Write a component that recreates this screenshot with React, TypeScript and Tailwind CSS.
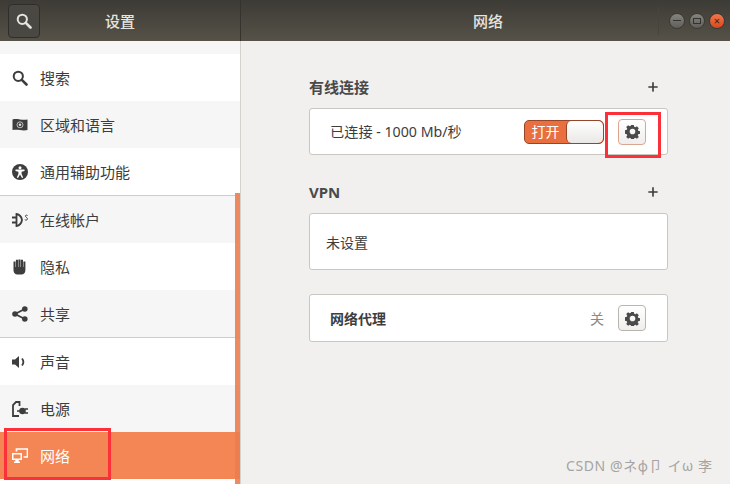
import React from 'react';
import { Plus } from 'lucide-react';

const font = "font-['Noto_Sans','Noto_Sans_CJK_SC',sans-serif]";

const SearchIcon = ({ color = '#3d3d3d' }: { color?: string }) => (
  <svg width="16" height="16" viewBox="0 0 16 16">
    <circle cx="6.300" cy="6.300" r="4.600" fill="none" stroke={color} strokeWidth="2" />
    <path d="M9.800 9.800L14.500 14.500" stroke={color} strokeWidth="2.600" strokeLinecap="round" />
  </svg>
);

const GearIcon = () => (
  <svg width="15" height="15" viewBox="0 0 16 16">
    <path
      fill="#4a4a4a"
      fillRule="evenodd"
      d="M6.600 1h2.800l.4 2 1.200.5 1.700-1.100 2 2-1.100 1.700.5 1.200 2 .4v2.800l-2 .4-.5 1.200 1.100 1.700-2 2-1.700-1.100-1.200.5-.4 2H6.600l-.4-2-1.200-.5-1.700 1.100-2-2 1.100-1.700-.5-1.200-2-.4V6.600l2-.4.5-1.200-1.100-1.700 2-2 1.700 1.100 1.200-.5zM8 5a3 3 0 1 0 0 6 3 3 0 0 0 0-6z"
    />
  </svg>
);

const RegionIcon = () => (
  <svg width="16" height="16" viewBox="0 0 16 16">
    <path fill="#3d3d3d" d="M.5 2.500c2.500-.6 4.500-.4 7.500 0s5 .4 7.500 0v10.500c-2.500.5-4.500.5-7.500 0s-5-.5-7.500 0z" />
    <circle cx="8" cy="7.800" r="3" fill="none" stroke="#ddd" strokeWidth="0.800" />
    <circle cx="8" cy="7.800" r="1.300" fill="#ddd" />
  </svg>
);

const AccessIcon = () => (
  <svg width="16" height="16" viewBox="0 0 16 16">
    <circle cx="8" cy="8" r="8" fill="#3d3d3d" />
    <circle cx="8" cy="3.800" r="1.500" fill="#fff" />
    <path fill="#fff" d="M3.500 5.600h9v1.300L9.600 7.700v2.200l1.600 3.500-1.200.5L8 10.600l-2 3.300-1.200-.5 1.600-3.500V7.700L3.500 6.900z" />
  </svg>
);

const AccountsIcon = () => (
  <svg width="16" height="16" viewBox="0 0 16 16">
    <path fill="none" stroke="#3d3d3d" strokeWidth="1.800" d="M0 5.500h4M0 10.500h4M4.500 2c3 .5 5 3 5.500 6-.5 3-2.500 5.500-5.500 6z" />
    <path fill="none" stroke="#3d3d3d" strokeWidth="1" d="M15.500 3.500c-1-.8-2.500-.3-2 .9s2.300 1.300 1.800 2.800-1.800 1-2.500.4" />
  </svg>
);

const HandIcon = () => (
  <svg width="16" height="16" viewBox="0 0 16 16">
    <path
      fill="#3d3d3d"
      d="M1.500 2.500H3.500V8h.4V.8H6V8h.4V.5h2V8h.4V.8H11V8h.4V2.500h2V11c0 2.800-1.500 4.500-4 4.500H5.500c-2.500 0-4-1.700-4-4.500z"
    />
  </svg>
);

const ShareIcon = () => (
  <svg width="16" height="16" viewBox="0 0 16 16">
    <path fill="none" stroke="#3d3d3d" strokeWidth="1.800" d="M12.800 3L3 8l9.800 5" />
    <circle cx="3" cy="8" r="2.800" fill="#3d3d3d" />
    <circle cx="12.800" cy="3" r="2.800" fill="#3d3d3d" />
    <circle cx="12.800" cy="13" r="2.800" fill="#3d3d3d" />
  </svg>
);

const SoundIcon = () => (
  <svg width="16" height="16" viewBox="0 0 16 16">
    <path fill="#3d3d3d" d="M0 5.500h3L7 2v12l-4-3.500H0z" />
    <path fill="none" stroke="#3d3d3d" strokeWidth="1.800" d="M10 4.500c1.600 2 1.600 5 0 7" />
  </svg>
);

const PowerIcon = () => (
  <svg width="16" height="16" viewBox="0 0 16 16">
    <path fill="none" stroke="#3d3d3d" strokeWidth="1.800" d="M7 15H1V4l3-3h3.500v4" />
    <circle cx="10.500" cy="10" r="3.300" fill="#3d3d3d" />
    <path fill="none" stroke="#3d3d3d" strokeWidth="1.500" d="M5 10h3M13 8h3M13 12h3" />
  </svg>
);

const NetworkIcon = () => (
  <svg width="16" height="16" viewBox="0 0 16 16">
    <path fill="#fff" fillRule="evenodd" d="M0 5h10v7H6.700v1.500H8V15H2v-1.500h1.300V12H0zM1.500 6.500v4h7v-4z" />
    <path fill="none" stroke="#fff" strokeWidth="1.700" d="M4.500 3.500V1h11v8H11.500" />
  </svg>
);

const navItems = [
  { label: '搜索', icon: <SearchIcon />, bg: 'bg-white' },
  { label: '区域和语言', icon: <RegionIcon />, bg: 'bg-[#f6f6f6]' },
  { label: '通用辅助功能', icon: <AccessIcon />, bg: 'bg-white', divider: true },
  { label: '在线帐户', icon: <AccountsIcon />, bg: 'bg-[#f6f6f6]' },
  { label: '隐私', icon: <HandIcon />, bg: 'bg-white' },
  { label: '共享', icon: <ShareIcon />, bg: 'bg-[#f6f6f6]', divider: true },
  { label: '声音', icon: <SoundIcon />, bg: 'bg-white' },
  { label: '电源', icon: <PowerIcon />, bg: 'bg-[#f6f6f6]' },
  { label: '网络', icon: <NetworkIcon />, bg: 'bg-[#f48555]', active: true },
];

const WindowButton = ({ children, close }: { children: React.ReactNode; close?: boolean }) => (
  <div
    className={`w-4 h-4 rounded-full flex items-center justify-center border border-[#3b3a36] ${
      close ? 'bg-gradient-to-b from-[#f0764a] to-[#d9481c]' : 'bg-gradient-to-b from-[#85847f] to-[#5f5e59]'
    }`}
  >
    {children}
  </div>
);

const GearButton = ({ tinted }: { tinted?: boolean }) => (
  <div
    className={`w-[28px] h-[26px] rounded-[4px] border flex items-center justify-center bg-gradient-to-b from-white to-[#efeeec] ${
      tinted ? 'border-[#dba690]' : 'border-[#b8b5ae]'
    }`}
  >
    <GearIcon />
  </div>
);

export default function App() {
  return (
    <div className={`relative w-[730px] h-[484px] overflow-hidden flex flex-col bg-[#f1f0ee] text-[#3d3d3d] ${font}`}>
      {/* Header */}
      <header className="h-[41px] flex bg-gradient-to-b from-[#3d3b36] to-[#565248] text-[#e6e4de]">
        <div className="w-[241px] flex items-center border-r border-[#35332e]">
          <div className="ml-[8px] w-[32px] h-[34px] rounded-[4px] border border-[#2f2e2a] bg-[#4a4842] flex items-center justify-center">
            <SearchIcon color="#e6e4de" />
          </div>
          <span className="ml-[65px] pt-[2px] text-[15px] font-medium">设置</span>
        </div>
        <div className="flex-1 flex items-center">
          <span className="ml-[232px] pt-[2px] text-[15px] font-medium">网络</span>
          <div className="ml-auto mr-[5px] flex items-center gap-[4px]">
            <div className="w-px h-[28px] bg-[#47443d] mr-[6px]" />
            <WindowButton>
              <div className="w-[8px] h-[1.500px] bg-[#34332f]" />
            </WindowButton>
            <WindowButton>
              <div className="w-[8px] h-[6px] border border-[#34332f]" />
            </WindowButton>
            <WindowButton close>
              <span className="text-[11px] leading-none text-[#4b1c0c]">×</span>
            </WindowButton>
          </div>
        </div>
      </header>

      <div className="flex-1 flex min-h-0">
        {/* Sidebar */}
        <aside className="relative w-[241px] bg-white border-r border-[#d5d3ce] flex flex-col">
          <div className="h-[13px] bg-[#f6f6f6]" />
          {navItems.map((item) => (
            <React.Fragment key={item.label}>
              <div className={`h-[47px] flex items-center shrink-0 ${item.bg} ${item.active ? 'text-white' : ''}`}>
                <span className="w-[40px] pl-[12px] flex items-center">{item.icon}</span>
                <span className="pt-[2px] text-[15px]">{item.label}</span>
              </div>
              {item.divider && <div className="h-px bg-[#cfcdc9] shrink-0" />}
            </React.Fragment>
          ))}
          {/* Scrollbar */}
          <div className="absolute right-0 top-[152px] bottom-0 w-[5px] bg-[#ec7d50]/90" />
        </aside>

        {/* Main panel */}
        <main className="flex-1 pl-[68px] pt-[36px]">
          <div className="w-[359px]">
            <div className="h-[20px] flex items-center justify-between mb-[11px]">
              <span className="text-[15px] font-bold text-[#4a4a4a]">有线连接</span>
              <Plus size={14} strokeWidth={2.800} color="#3d3d3d" className="mr-[8px]" />
            </div>
            <div className="h-[47px] bg-white border border-[#c9c7c2] rounded-[3px] flex items-center pl-[20px] pr-[21px]">
              <span className="text-[14.200px]">已连接 - 1000 Mb/秒</span>
              <div className="ml-auto mr-[14px] flex w-[80px] h-[24px] rounded-[5px] border border-[#97452a] bg-[#e96f3f] overflow-hidden">
                <span className="w-[41px] text-center text-[14px] leading-[22px] text-white">打开</span>
                <div className="flex-1 rounded-[5px] bg-gradient-to-b from-white to-[#e9e8e6] border-l border-[#97452a]" />
              </div>
              <GearButton tinted />
            </div>

            <div className="h-[20px] flex items-center justify-between mt-[27px] mb-[11px]">
              <span className="text-[15px] font-bold text-[#4a4a4a]">VPN</span>
              <Plus size={14} strokeWidth={2.800} color="#3d3d3d" className="mr-[8px]" />
            </div>
            <div className="h-[57px] bg-white border border-[#c9c7c2] rounded-[3px] flex items-center pl-[16px] pt-[2px]">
              <span className="text-[14px]">未设置</span>
            </div>

            <div className="mt-[24px] h-[48px] bg-white border border-[#c9c7c2] rounded-[3px] flex items-center pl-[20px] pr-[21px]">
              <span className="text-[14px] font-bold">网络代理</span>
              <span className="ml-auto mr-[14px] text-[14px] text-[#8c8a85]">关</span>
              <GearButton />
            </div>
          </div>
        </main>
      </div>

      {/* Annotation boxes over the screenshot */}
      <div className="absolute left-[605px] top-[112px] w-[56px] h-[46px] border-[3px] border-[#fb3038]" />
      <div className="absolute left-[4px] top-[428px] w-[107px] h-[52px] border-[3px] border-[#fb3038]" />
      <span className="absolute left-[566px] top-[456px] text-[14px] leading-[20px] tracking-[0.600px] text-[#a5a4a2]">
        CSDN @ネφ卩 イω 李
      </span>
    </div>
  );
}
